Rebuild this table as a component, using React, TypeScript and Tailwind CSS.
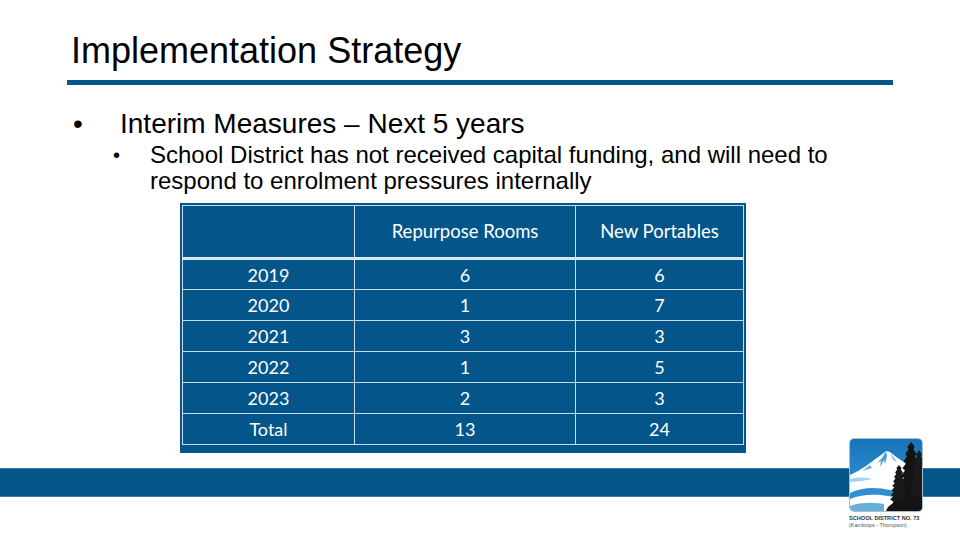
import type { ReactNode } from 'react';

const rows = [
  ['2019', '6', '6'],
  ['2020', '1', '7'],
  ['2021', '3', '3'],
  ['2022', '1', '5'],
  ['2023', '2', '3'],
  ['Total', '13', '24'],
];

/** jagged conifer silhouette */
function tree(cx: number, top: number, bottom: number, w: number): string {
  const pts: string[] = [`${cx},${top}`];
  const steps = 8;
  const h = bottom - top;
  for (let i = 1; i <= steps; i++) {
    const y = top + (h * i) / steps;
    const half = (w / 2) * Math.pow(i / steps, 0.6);
    pts.push(`${cx + half},${y - h / steps / 3}`);
    pts.push(`${cx + half * 0.7},${y}`);
  }
  const left: string[] = [];
  for (let i = steps; i >= 1; i--) {
    const y = top + (h * i) / steps;
    const half = (w / 2) * Math.pow(i / steps, 0.6);
    left.push(`${cx - half * 0.7},${y}`);
    left.push(`${cx - half},${y - h / steps / 3}`);
  }
  return [...pts, `${cx + 3},${bottom + 10}`, `${cx - 3},${bottom + 10}`, ...left].join(' ');
}

function Logo(): ReactNode {
  return (
    <div className="absolute left-[849px] top-[438px] flex flex-col items-start">
      <div className="h-[74px] w-[74px] overflow-hidden rounded-[5px] border border-[#a9bfcf] bg-white">
        <svg width="72" height="72" viewBox="0 0 72 72">
          <defs>
            <linearGradient id="sky" x1="0" y1="0" x2="0" y2="1">
              <stop offset="0" stopColor="#1675ba" />
              <stop offset="1" stopColor="#3d9cd8" />
            </linearGradient>
          </defs>
          <rect width="72" height="72" fill="url(#sky)" />
          <path d="M0 36 L8 32 L16 27 L24 21 L31 16 L36 12 L40 13 L45 17 L52 22 L60 28 L72 34 V72 H0 Z" fill="#fff" />
          <path d="M36 12 L32 19 L27 24 L31 22 L30 28 L34 21 L35 25 L37 17 Z" fill="#4f9fd6" />
          <path d="M20 26 L12 32 L22 29 Z" fill="#6fb2e0" />
          <path d="M40 13 L43 21 L47 23 Z" fill="#8ec4e8" />
          <path d="M0 40 C8 38 14 38 22 40 L12 42 L0 43 Z" fill="#a7d0ec" />
          <path d="M0 54 C12 48 26 48 40 51 C50 53 60 55 72 53 V59 C58 61 48 59 38 57 C26 55 12 55 0 60 Z" fill="#2f8fd0" />
          <path d="M0 67 C10 63 22 63 34 65 L34 72 H0 Z" fill="#6aaedc" />
          <polygon points={tree(61, 3, 60, 26)} fill="#141414" />
          <polygon points={tree(69, 11, 62, 20)} fill="#1a1a1a" />
          <polygon points={tree(49, 26, 62, 18)} fill="#181818" />
          <path d="M38 68 L48 60 L72 56 V72 H36 Z" fill="#141414" />
        </svg>
      </div>
      <div className="mt-[3px] font-['Liberation_Sans',sans-serif] text-[5.6px] font-bold leading-[7px] text-[#333]">
        SCHOOL DISTRICT NO. 73
      </div>
      <div className="font-['Liberation_Sans',sans-serif] text-[5.4px] leading-[7px] text-[#555]">
        (Kamloops - Thompson)
      </div>
    </div>
  );
}

export default function App(): ReactNode {
  return (
    <div className="relative h-[540px] w-[960px] overflow-hidden bg-white font-['Liberation_Sans',Arial,sans-serif] text-black">
      <div className="flex flex-col">
        <h1 className="ml-[71px] mt-[33px] text-[36px] font-normal leading-[36px]">Implementation Strategy</h1>
        <div className="ml-[67px] mt-[11px] h-[5px] w-[826px] bg-[#05578a]" />

        <div className="ml-[73px] mt-[23px] flex text-[28px] leading-[32px]">
          <span className="w-[47px]">•</span>
          <span>Interim Measures – Next 5 years</span>
        </div>

        <div className="ml-[113px] mt-[2px] flex text-[24px] leading-[26px]">
          <span className="w-[37px] shrink-0 text-[20px]">•</span>
          <span className="w-[690px]">
            School District has not received capital funding, and will need to respond to enrolment pressures internally
          </span>
        </div>

        <div className="ml-[180px] mt-[9px] w-[566px] bg-[#03558a] px-[2px] pb-[8px] pt-[2px]">
          <table className="w-full border-collapse font-['Lato','Open_Sans',sans-serif] text-white">
            <thead>
              <tr className="h-[53px] border-b-[3px] border-[#d8e6f1]">
                <th className="w-[172px] border border-[#c8dbea]" />
                <th className="w-[221px] border border-[#c8dbea] text-[18.5px] font-normal">Repurpose Rooms</th>
                <th className="border border-[#c8dbea] text-[18.5px] font-normal">New Portables</th>
              </tr>
            </thead>
            <tbody>
              {rows.map((r) => (
                <tr key={r[0]} className="h-[31px]">
                  {r.map((c, i) => (
                    <td key={i} className="border border-[#c8dbea] p-0 text-center text-[18px] leading-[22px]">
                      {c}
                    </td>
                  ))}
                </tr>
              ))}
            </tbody>
          </table>
        </div>

        <div className="mt-[15px] h-[29px] w-full border-y border-[#3a7aa6] bg-[#04568a]" />
      </div>
      <Logo />
    </div>
  );
}
